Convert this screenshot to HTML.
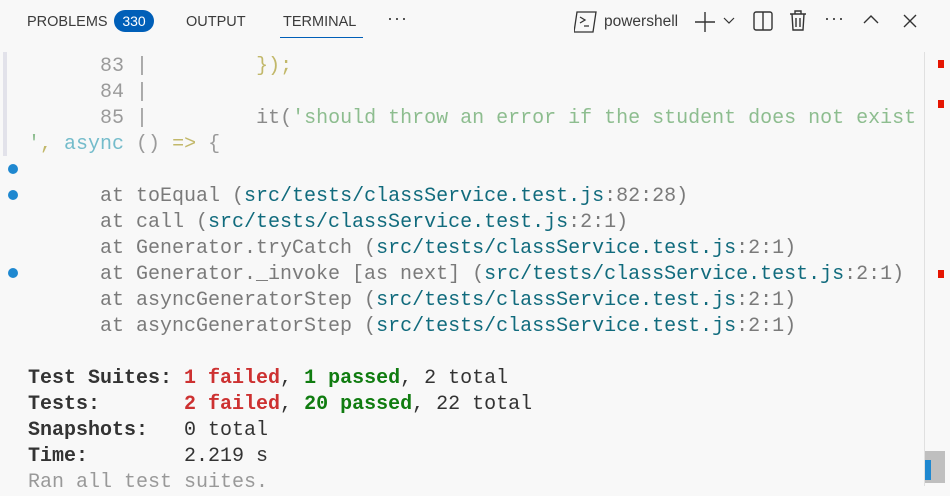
<!DOCTYPE html>
<html><head><meta charset="utf-8"><style>
*{margin:0;padding:0;box-sizing:border-box}
body{width:950px;height:486px;background:#f8f8f8;overflow:hidden;position:relative;font-family:"Liberation Sans",sans-serif}
.tab{position:absolute;top:14px;font-size:14.5px;color:#3b3b3b}
.badge{position:absolute;left:114px;top:10px;width:40px;height:22px;border-radius:11px;background:#005fb8;color:#fff;font-size:14px;text-align:center;line-height:22px}
.ul{position:absolute;left:280px;top:37px;width:83px;height:1px;background:#005fb8}
pre{position:absolute;left:28px;top:54px;font-family:"Liberation Mono",monospace;font-size:20px;line-height:26px;color:#7a7a7a;white-space:pre}
.n{color:#9a9a9a}.y{color:#c2b86a}.g{color:#8dbd8f}.c{color:#74bccb}.p{color:#116b7d}
.d{color:#333}.r{color:#cd3131;font-weight:bold}.gr{color:#107c10;font-weight:bold}.b{color:#333;font-weight:bold}
.dot{position:absolute;left:8px;width:10px;height:10px;border-radius:5px;background:#1f88d0}
.rm{position:absolute;left:938px;width:6px;height:8px;background:#e51400}
svg{position:absolute}
</style></head><body>
<div class="tab" style="left:27px">PROBLEMS</div>
<div class="badge">330</div>
<div class="tab" style="left:186px">OUTPUT</div>
<div class="tab" style="left:283px">TERMINAL</div>
<div class="ul"></div>
<div class="tab" style="left:387px;top:8px;font-size:18px;letter-spacing:1px">···</div>
<svg style="left:574px;top:11px" width="24" height="22" viewBox="0 0 24 22"><path d="M3 1h19l-3 20H0z" fill="none" stroke="#333" stroke-width="1.3"/><path d="M6 6l5 3-5 3M10 15h5" fill="none" stroke="#333" stroke-width="1.3"/></svg>
<div class="tab" style="left:604px;font-size:15.5px;top:13px">powershell</div>
<svg style="left:695px;top:12px" width="20" height="20"><path d="M10 0v20M0 10h20" stroke="#333" stroke-width="1.4"/></svg>
<svg style="left:723px;top:17px" width="12" height="8"><path d="M1 1l5 5 5-5" fill="none" stroke="#333" stroke-width="1.2"/></svg>
<svg style="left:753px;top:11px" width="20" height="20"><rect x="1" y="1" width="18" height="18" rx="2" fill="none" stroke="#333" stroke-width="1.4"/><path d="M10 1v18" stroke="#333" stroke-width="1.4"/></svg>
<svg style="left:789px;top:10px" width="18" height="22"><path d="M1 4h16M6 4V1h6v3M3 4l1 16h10l1-16M7 8v9M11 8v9" fill="none" stroke="#333" stroke-width="1.4"/></svg>
<div class="tab" style="left:824px;top:8px;font-size:18px;letter-spacing:1px">···</div>
<svg style="left:863px;top:14px" width="16" height="10"><path d="M1 9l7-7 7 7" fill="none" stroke="#333" stroke-width="1.4"/></svg>
<svg style="left:903px;top:14px" width="14" height="14"><path d="M1 1l12 12M13 1L1 13" stroke="#333" stroke-width="1.4"/></svg>
<div style="position:absolute;left:3px;top:52px;width:4px;height:104px;background:#e2e2ea"></div>
<div style="position:absolute;left:924px;top:52px;width:1px;height:434px;background:#e0e0e0"></div>
<div class="rm" style="top:60px"></div><div class="rm" style="top:100px"></div><div class="rm" style="top:270px"></div>
<div style="position:absolute;left:925px;top:451px;width:20px;height:32px;background:#bfbfbf"></div>
<div style="position:absolute;left:925px;top:460px;width:6px;height:20px;background:#1f88d0"></div>
<div class="dot" style="top:164px"></div><div class="dot" style="top:190px"></div><div class="dot" style="top:268px"></div>
<pre><span class="n">      83 |</span>         <span class="y">});</span>
<span class="n">      84 |</span>
<span class="n">      85 |</span>         <span style="color:#8a8a8a">it(</span><span class="g">'should throw an error if the student does not exist</span>
<span class="g">'</span><span class="y">, </span><span class="c">async</span><span class="n"> () </span><span class="y">=&gt;</span><span class="n"> {</span>

      at toEqual (<span class="p">src/tests/classService.test.js</span>:82:28)
      at call (<span class="p">src/tests/classService.test.js</span>:2:1)
      at Generator.tryCatch (<span class="p">src/tests/classService.test.js</span>:2:1)
      at Generator._invoke [as next] (<span class="p">src/tests/classService.test.js</span>:2:1)
      at asyncGeneratorStep (<span class="p">src/tests/classService.test.js</span>:2:1)
      at asyncGeneratorStep (<span class="p">src/tests/classService.test.js</span>:2:1)

<span class="b">Test Suites: </span><span class="r">1 failed</span><span class="d">, </span><span class="gr">1 passed</span><span class="d">, 2 total</span>
<span class="b">Tests:       </span><span class="r">2 failed</span><span class="d">, </span><span class="gr">20 passed</span><span class="d">, 22 total</span>
<span class="b">Snapshots:   </span><span class="d">0 total</span>
<span class="b">Time:        </span><span class="d">2.219 s</span>
<span style="color:#999">Ran all test suites.</span></pre>
</body></html>
